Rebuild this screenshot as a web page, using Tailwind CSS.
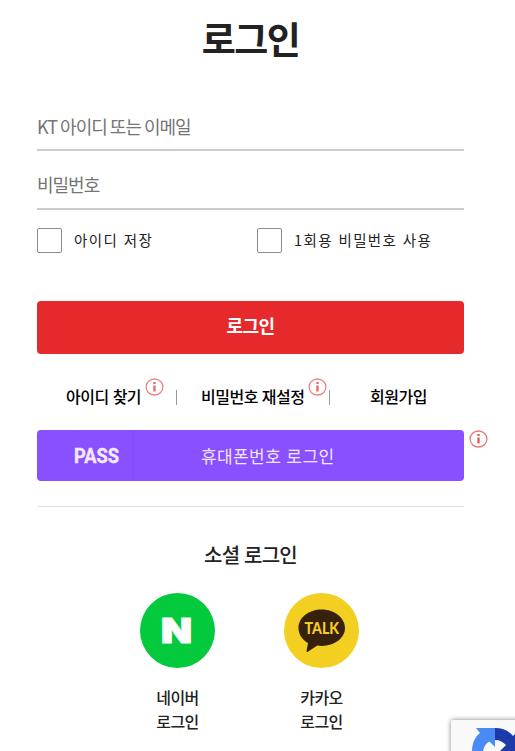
<!DOCTYPE html>
<html lang="ko">
<head>
  <meta charset="UTF-8" />
  <meta name="viewport" content="width=device-width, initial-scale=1.0" />
  <title>로그인</title>
  <script src="https://cdn.jsdelivr.net/npm/@tailwindcss/browser@4"></script>
</head>
<body class="bg-white font-['Noto_Sans_CJK_KR',sans-serif] text-[#222]">
  <div class="relative h-[751px] w-[515px] overflow-hidden">
    <main class="ml-[37px] w-[427px]">
      <h1 class="pt-[11px] text-center text-[37px] leading-[55px] font-bold tracking-[-1.6px]">로그인</h1>

      <!-- 로그인 폼 -->
      <form class="mt-[37px]">
        <input type="text" placeholder="KT 아이디 또는 이메일" class="block h-[48px] w-full border-b-2 border-[#ccc] pb-[1px] text-[18px] tracking-[-1px] [word-spacing:-1px] placeholder:text-[#757575]" />
        <input type="password" placeholder="비밀번호" class="mt-[11px] block h-[48px] w-full border-b-2 border-[#ccc] pb-[2px] text-[18px] tracking-[-1px] placeholder:text-[#757575]" />

        <div class="mt-[18px] flex h-[25px] text-[14.5px] leading-[24px] tracking-[1.4px] text-[#222]">
          <label class="flex w-[220px] gap-3">
            <input type="checkbox" class="size-[25px] appearance-none rounded-[2px] border border-[#8c8c8c]" />
            아이디 저장
          </label>
          <label class="flex gap-3 whitespace-nowrap">
            <input type="checkbox" class="size-[25px] appearance-none rounded-[2px] border border-[#8c8c8c]" />
            1회용 비밀번호 사용
          </label>
        </div>

        <button type="button" class="mt-[48px] block h-[53px] w-full rounded-[4px] bg-[#e62a2c] pb-[5px] text-[18px] leading-[48px] font-bold tracking-[-0.6px] text-white">로그인</button>
      </form>

      <!-- 아이디 / 비밀번호 / 회원가입 -->
      <nav class="mt-[24px] flex h-[52px] text-[16px] leading-[37px] font-medium tracking-[-0.5px] whitespace-nowrap text-black">
        <div class="flex w-[139px] pl-[29px]">
          <a class="w-[75px]">아이디 찾기</a>
          <svg class="ml-[4px] h-[18px] w-[19px] shrink-0" viewBox="0 0 19 18" fill="none">
            <ellipse cx="9.5" cy="9" rx="8.4" ry="8" stroke="#ee8585" stroke-width="1.3" />
            <path d="M9.5 4v2M9.5 7.500v6" stroke="#e86a6a" stroke-width="2.4" />
          </svg>
        </div>
        <span class="mt-[12px] h-[15px] w-px bg-[#999]"></span>
        <div class="flex w-[152px] pl-[24px]">
          <a class="w-[103px]">비밀번호 재설정</a>
          <svg class="ml-[4px] h-[18px] w-[19px] shrink-0" viewBox="0 0 19 18" fill="none">
            <ellipse cx="9.5" cy="9" rx="8.4" ry="8" stroke="#ee8585" stroke-width="1.3" />
            <path d="M9.5 4v2M9.5 7.500v6" stroke="#e86a6a" stroke-width="2.4" />
          </svg>
        </div>
        <span class="mt-[12px] h-[15px] w-px bg-[#999]"></span>
        <a class="pl-[40px]">회원가입</a>
      </nav>

      <!-- PASS 로그인 -->
      <div class="flex w-[451px] items-start gap-[5px]">
        <button type="button" class="flex h-[51px] w-[427px] shrink-0 rounded-[4px] bg-[#8950ff] text-left leading-[51px]">
          <span class="w-[97px] border-r border-[#844cf8] pl-[36px]">
            <svg class="h-[51px] w-[56px]" viewBox="0 0 56 51">
              <text x="1" y="32.5" textLength="45" lengthAdjust="spacingAndGlyphs" font-family="Roboto" font-size="20" font-weight="700" fill="#f4eaff" stroke="#f4eaff" stroke-width=".4">PASS</text>
            </svg>
          </span>
          <span class="pl-[67px] text-[17px] tracking-[0.4px] text-[#f0e5ff]">휴대폰번호 로그인</span>
        </button>
        <svg class="h-[18px] w-[19px] shrink-0" viewBox="0 0 19 18" fill="none">
          <ellipse cx="9.5" cy="9" rx="8.4" ry="8" stroke="#e87878" stroke-width="1.3" />
          <path d="M9.5 4v2M9.5 7.500v6" stroke="#df6060" stroke-width="2.4" />
        </svg>
      </div>

      <!-- 소셜 로그인 -->
      <section class="mt-[25px] border-t border-[#e2e2e2] pt-[33px]">
        <h2 class="text-center text-[20px] leading-[30px] font-medium tracking-[-0.8px]">소셜 로그인</h2>
        <ul class="mt-[23px] flex gap-[69px] pl-[103px] text-center text-[16px] leading-[24px] font-medium tracking-[-0.6px]">
          <li class="w-[75px]">
            <svg class="mb-[17px] size-[75px]" viewBox="0 0 75 75">
              <circle cx="37.5" cy="37.5" r="37.5" fill="#03c93c" />
              <text x="21" y="49.5" textLength="31" lengthAdjust="spacingAndGlyphs" font-family="Inter" font-size="34" font-weight="900" letter-spacing="0" fill="#fff" stroke="#fff" stroke-width="1.2">N</text>
            </svg>
            네이버<br />로그인
          </li>
          <li class="w-[75px]">
            <svg class="mb-[17px] size-[75px]" viewBox="0 0 75 75">
              <circle cx="37.5" cy="37.5" r="37.5" fill="#f3cf21" />
              <path d="M37.7 16.5C24.8 16.5 14.5 24.6 14.5 35c0 6.5 3.8 11.8 9.5 15l-1.5 8.3c0 .9.8 1 1.4.5l9.4-6.3c1.4.3 2.9.4 4.4.4C50.6 52.9 61 45 61 35S50.6 16.5 37.7 16.5Z" fill="#37200c" />
              <text x="20.5" y="41" textLength="34.5" lengthAdjust="spacingAndGlyphs" font-family="Lato" font-size="16" font-weight="900" letter-spacing="0" fill="#f3cf21">TALK</text>
            </svg>
            카카오<br />로그인
          </li>
        </ul>
      </section>
    </main>

    <!-- reCAPTCHA 배지 -->
    <div class="absolute top-[720px] left-[451px] h-[60px] w-[256px] rounded-[2px] bg-[#f9f9f9] shadow-[0_0_5px_gray]">
      <svg class="absolute top-[8px] left-[20px] size-[48px]" viewBox="0 0 48 48">
        <path d="M5 0H24V19L18.5 13.5Q13 16 12 24H1C1 15 4 9 9 5Z" fill="#4a8af4" />
        <path d="M24 0c8 0 14 3 18 8l6-6v22H28l7-7c-3-3-6-5-11-5Z" fill="#1c3aa9" />
      </svg>
    </div>
  </div>
</body>
</html>
